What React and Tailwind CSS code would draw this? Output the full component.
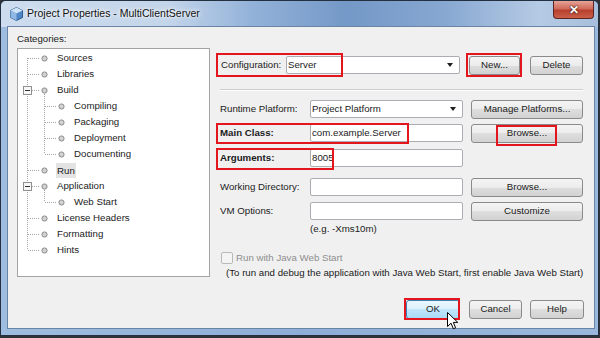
import React from 'react';

const treeRows = [
  { t: 'Sources', l: 1, first: true },
  { t: 'Libraries', l: 1 },
  { t: 'Build', l: 1, exp: true },
  { t: 'Compiling', l: 2 },
  { t: 'Packaging', l: 2 },
  { t: 'Deployment', l: 2 },
  { t: 'Documenting', l: 2, lastChild: true },
  { t: 'Run', l: 1, sel: true },
  { t: 'Application', l: 1, exp: true },
  { t: 'Web Start', l: 2, lastChild: true },
  { t: 'License Headers', l: 1 },
  { t: 'Formatting', l: 1 },
  { t: 'Hints', l: 1, last: true },
];

const dot = { stroke: '#a6a6a6', strokeWidth: 1, strokeDasharray: '1 1' };

function TreeRow({ row }) {
  const w = row.l === 1 ? 39 : 56;
  return (
    <div className="flex items-center h-[16px]">
      <svg width={w} height="16" className="shrink-0">
        {row.l === 1 ? (
          <>
            <line x1="9.5" x2="9.5" y1={row.first ? 8 : 0} y2={row.last ? 8 : 16} {...dot} />
            <line x1={row.exp ? 14 : 10} x2="22" y1="8.5" y2="8.5" {...dot} />
            {row.exp && (
              <>
                <line x1="26.5" x2="26.5" y1="12" y2="16" {...dot} />
                <rect x="5.5" y="4.5" width="8" height="8" fill="#f7f7f7" stroke="#8f8f8f" />
                <line x1="7" x2="12" y1="8.5" y2="8.5" stroke="#333" />
              </>
            )}
            <circle cx="26.5" cy="8.5" r="2.6" fill="#d2d2d2" stroke="#8a8a8a" />
          </>
        ) : (
          <>
            <line x1="9.5" x2="9.5" y1="0" y2="16" {...dot} />
            <line x1="26.5" x2="26.5" y1="0" y2={row.lastChild ? 8 : 16} {...dot} />
            <line x1="27" x2="39" y1="8.5" y2="8.5" {...dot} />
            <circle cx="43.5" cy="8.5" r="2.6" fill="#d2d2d2" stroke="#8a8a8a" />
          </>
        )}
      </svg>
      <span className={row.sel ? 'bg-[#e3e3e3] -ml-[1px] px-[1px] leading-[15px]' : ''}>{row.t}</span>
    </div>
  );
}

function Btn({ w, children, primary }) {
  return (
    <div
      className={`${w} h-[19px] shrink-0 flex items-center justify-center rounded-[3px] border text-[#1b1b1b] ${
        primary
          ? 'border-[#3c7fb1] bg-[linear-gradient(to_bottom,#ebf7fd,#dbf1fc_50%,#c0e6fc_50%,#a9daf5)]'
          : 'border-[#8a8a8a] bg-[linear-gradient(to_bottom,#f4f4f4,#ececec_50%,#dedede_50%,#d2d2d2)]'
      }`}
    >
      {children}
    </div>
  );
}

function Field({ w, value }) {
  return (
    <div className={`${w} h-[18px] shrink-0 border border-[#abadb3] rounded-[2px] bg-white flex items-center pl-[1px] text-[#1b1b1b]`}>
      {value}
    </div>
  );
}

function Combo({ w, value }) {
  return (
    <div className={`${w} h-[18px] shrink-0 border border-[#abadb3] rounded-[2px] bg-white flex items-center pl-[1px] pr-[6px] text-[#1b1b1b]`}>
      <span className="flex-1">{value}</span>
      <svg width="6" height="4">
        <path d="M0 0H6L3 4Z" fill="#1e1e1e" />
      </svg>
    </div>
  );
}

function RedBox({ className }) {
  return <div className={`absolute border-2 border-[#e3161e] ${className}`} />;
}

export default function App() {
  return (
    <div className="relative w-[600px] h-[338px] overflow-hidden bg-[#2f3238] font-['Liberation_Sans',Arial,sans-serif] text-[9.7px]">
      <div className="w-[599px] h-[336px] border border-[#22303f] rounded-t-[6px] bg-[linear-gradient(to_right,#9fbde0,#8eaed7_50%,#9ab8dc)] flex flex-col">
        {/* title bar */}
        <div className="h-[26px] flex items-center bg-[linear-gradient(to_right,#cddcee,#c3d5ea_28%,#93b2d9_42%,#7498c7_58%,#86a7d1_74%,#b5cae4_90%,#a7bfdc)] rounded-t-[5px]">
          <svg width="13" height="14" viewBox="0 0 13 14" className="ml-[9px]">
            <path d="M6.5 0.5L12.5 3.5V10.5L6.5 13.5L0.5 10.5V3.5Z" fill="#4f86c6" stroke="#2c5a8f" />
            <path d="M6.5 0.5L12.5 3.5L6.5 6.5L0.5 3.5Z" fill="#cfe3f7" />
            <path d="M6.5 6.5V13.5L0.5 10.5V3.5Z" fill="#8fb8e4" />
          </svg>
          <span className="ml-[4px] text-[10.5px] text-[#111] [text-shadow:0_0_6px_#fff,0_0_3px_#fff]">
            Project Properties - MultiClientServer
          </span>
          <div className="ml-auto mr-[4px] self-start w-[41px] h-[18px] rounded-b-[4px] border border-t-0 border-[#5e2520] bg-[linear-gradient(to_bottom,#e6a397,#d06b5b_45%,#b8402f_55%,#c9604a)] flex items-center justify-center">
            <span className="text-white font-bold text-[12px] leading-none [text-shadow:0_0_1px_#3a0d08,0_0_2px_#3a0d08]">✕</span>
          </div>
        </div>

        {/* content */}
        <div className="ml-[7px] w-[586px] h-[301px] bg-[#f0f0f0] ring-1 ring-[#6a84a6] flex flex-col text-[#1b1b1b]">
          <div className="h-[252px] flex">
            <div className="pl-[9px] flex flex-col">
              <div className="mt-[6px] leading-[12px]">Categories:</div>
              <div className="mt-[3px] w-[193px] h-[229px] border border-[#a3a3a3] bg-white pt-[1px]">
                {treeRows.map((r) => (
                  <TreeRow key={r.t} row={r} />
                ))}
              </div>
            </div>

            <div className="ml-[10px] w-[363px] flex flex-col">
              <div className="mt-[29px] h-[19px] flex items-start">
                <div className="w-[66px] pl-[1px] h-[18px] flex items-center">Configuration:</div>
                <Combo w="w-[174px]" value="Server" />
                <div className="ml-[9px]"><Btn w="w-[51px]">New...</Btn></div>
                <div className="ml-[10px]"><Btn w="w-[53px]">Delete</Btn></div>
              </div>

              <div className="mt-[14px] h-[2px] border-t border-[#cdcdcd] border-b border-b-white" />

              <div className="mt-[9px] h-[19px] flex items-start">
                <div className="w-[90px] h-[18px] flex items-center">Runtime Platform:</div>
                <Combo w="w-[153px]" value="Project Platform" />
                <div className="ml-[8px]"><Btn w="w-[112px]">Manage Platforms...</Btn></div>
              </div>

              <div className="mt-[5px] h-[19px] flex items-start">
                <div className="w-[90px] h-[18px] flex items-center font-bold">Main Class:</div>
                <Field w="w-[153px]" value="com.example.Server" />
                <div className="ml-[8px]"><Btn w="w-[112px]">Browse...</Btn></div>
              </div>

              <div className="mt-[6px] h-[18px] flex items-start">
                <div className="w-[90px] h-[18px] flex items-center font-bold">Arguments:</div>
                <Field w="w-[153px]" value="8005" />
              </div>

              <div className="mt-[11px] h-[19px] flex items-start">
                <div className="w-[90px] h-[18px] flex items-center">Working Directory:</div>
                <Field w="w-[153px]" value="" />
                <div className="ml-[8px]"><Btn w="w-[112px]">Browse...</Btn></div>
              </div>

              <div className="mt-[5px] h-[19px] flex items-start">
                <div className="w-[90px] h-[18px] flex items-center">VM Options:</div>
                <Field w="w-[153px]" value="" />
                <div className="ml-[8px]"><Btn w="w-[112px]">Customize</Btn></div>
              </div>

              <div className="mt-[2px] ml-[90px] h-[12px] leading-[12px]">(e.g. -Xms10m)</div>

              <div className="mt-[16px] h-[14px] flex items-center">
                <div className="ml-[1px] w-[12px] h-[12px] border border-[#b9b9b9] rounded-[2px] bg-[#f4f4f4]" />
                <span className="ml-[3px] text-[#8e8e8e]">Run with Java Web Start</span>
              </div>

              <div className="mt-[2px] ml-[6px] h-[12px] leading-[12px] whitespace-nowrap">
                (To run and debug the application with Java Web Start, first enable Java Web Start)
              </div>
            </div>
          </div>

          <div className="mt-[21px] pr-[10px] flex justify-end">
            <Btn w="w-[54px]" primary>OK</Btn>
            <div className="ml-[9px]"><Btn w="w-[53px]">Cancel</Btn></div>
            <div className="ml-[8px]"><Btn w="w-[54px]">Help</Btn></div>
          </div>
        </div>
      </div>

      {/* annotation boxes */}
      <RedBox className="left-[216px] top-[53px] w-[127px] h-[24px]" />
      <RedBox className="left-[466px] top-[53px] w-[56px] h-[24px]" />
      <RedBox className="left-[216px] top-[123px] w-[193px] h-[21px]" />
      <RedBox className="left-[496px] top-[125px] w-[61px] h-[21px]" />
      <RedBox className="left-[216px] top-[148px] w-[118px] h-[22px]" />
      <RedBox className="left-[404px] top-[298px] w-[56px] h-[22px]" />

      {/* mouse cursor */}
      <svg width="12" height="18" viewBox="0 0 12 18" className="absolute left-[447px] top-[312px]">
        <path d="M0.5 0.5V14.5L4 11.2L6.4 16.8L8.6 15.8L6.3 10.4H10.8Z" fill="#fff" stroke="#000" strokeLinejoin="round" />
      </svg>
    </div>
  );
}
